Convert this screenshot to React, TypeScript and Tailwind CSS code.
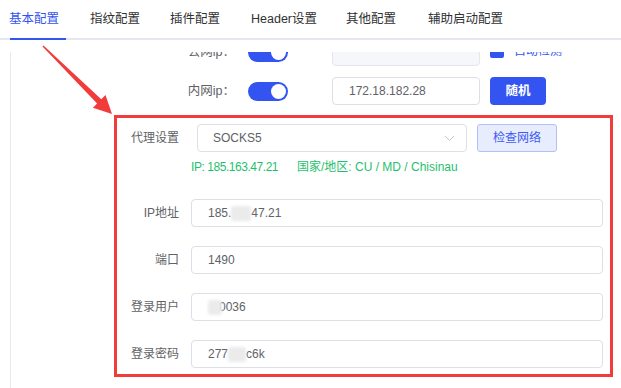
import React from "react";

const font = { fontFamily: '"Liberation Sans", "Noto Sans CJK SC", sans-serif' };

function Toggle() {
  return (
    <div className="w-[40px] h-[19px] rounded-full bg-[#3354f0] flex items-center justify-end pr-[2px] shrink-0">
      <div className="w-[15px] h-[15px] rounded-full bg-white" />
    </div>
  );
}

function Blob({ w }: { w: number }) {
  return (
    <span
      className="inline-block h-[15px] bg-[#ebebeb] blur-[1.5px] rounded-[3px] align-middle"
      style={{ width: w }}
    />
  );
}

function Field({ label, children }: { label: string; children: React.ReactNode }) {
  return (
    <div className="flex items-center h-[28px]">
      <div className="w-[62px] text-right text-[12px] text-[#606266] shrink-0">{label}</div>
      <div className="ml-[12px] w-[412px] h-[28px] border border-[#dcdfe6] rounded-[4px] flex items-center pl-[16px] text-[12px] text-[#606266]">
        {children}
      </div>
    </div>
  );
}

export default function App() {
  return (
    <div className="w-[621px] h-[388px] bg-white relative overflow-hidden" style={font}>
      {/* Tabs */}
      <div className="h-[40px] border-b-2 border-[#e4e7ed] flex items-end pl-[9px] text-[12.5px] text-[#303133]">
        <div className="w-[81px] h-[40px] -mb-[2px] flex flex-col">
          <div className="flex-1 flex items-center text-[#3354f0]">基本配置</div>
          <div className="ml-[1px] w-[56px] h-[2px] bg-[#3354f0]" />
        </div>
        <div className="h-[38px] flex items-center">
          <span className="w-[80px]">指纹配置</span>
          <span className="w-[81px]">插件配置</span>
          <span className="w-[95px]">Header设置</span>
          <span className="w-[82px]">其他配置</span>
          <span>辅助启动配置</span>
        </div>
      </div>

      {/* Content */}
      <div className="mt-[12px] ml-[10px] h-[336px] border-l border-[#e8eaee] overflow-hidden">
        <div className="-mt-[14px] flex flex-col">
          {/* Row 1 */}
          <div className="flex items-center h-[28px]">
            <div className="w-[224px] text-right text-[12.5px] text-[#606266] shrink-0">公网ip：</div>
            <div className="ml-[13px]"><Toggle /></div>
            <div className="ml-[44px] w-[148px] h-[28px] border border-[#e4e7ed] bg-[#f5f7fa] rounded-[4px]" />
            <div className="ml-[10px] flex items-center gap-[10px] text-[12px] text-[#3354f0]">
              <div className="w-[14px] h-[14px] rounded-[2px] bg-[#3354f0] -mt-[3px]" />
              <span className="-mt-[3px]">自动检测</span>
            </div>
          </div>
          {/* Row 2 */}
          <div className="flex items-center h-[28px] mt-[11px]">
            <div className="w-[224px] text-right text-[12.5px] text-[#606266] shrink-0">内网ip：</div>
            <div className="ml-[13px]"><Toggle /></div>
            <div className="ml-[44px] w-[148px] h-[28px] border border-[#dcdfe6] rounded-[4px] flex items-center pl-[16px] text-[12px] text-[#606266]">
              172.18.182.28
            </div>
            <div className="ml-[10px] w-[56px] h-[28px] rounded-[4px] bg-[#3354f0] text-white text-[12.5px] font-bold flex items-center justify-center">
              随机
            </div>
          </div>

          {/* Red framed proxy block */}
          <div className="mt-[10px] ml-[103px] w-[499px] border-[3px] border-[#f23b3b] pt-[6px] pb-[6px] pr-[7px] flex flex-col">
            <div className="flex items-center h-[28px]">
              <div className="w-[62px] text-right text-[12px] text-[#606266] shrink-0">代理设置</div>
              <div className="ml-[18px] w-[270px] h-[28px] border border-[#dcdfe6] rounded-[4px] flex items-center justify-between pl-[15px] pr-[11px] text-[12px] text-[#606266]">
                <span>SOCKS5</span>
                <svg width="11" height="7" viewBox="0 0 11 7" fill="none">
                  <path d="M1 1l4.5 4.5L10 1" stroke="#c0c4cc" strokeWidth="1" />
                </svg>
              </div>
              <div className="ml-[10px] w-[80px] h-[28px] rounded-[3px] border border-[#b3c0f7] bg-[#e8edfd] text-[12px] text-[#3d5af1] flex items-center justify-center">
                检查网络
              </div>
            </div>
            <div className="flex items-center h-[16px] mt-[7px] ml-[74px] text-[12px] text-[#1fbf6e]">
              <span className="w-[106px] tracking-[-0.45px]">IP: 185.163.47.21</span>
              <span>国家/地区: CU / MD / Chisinau</span>
            </div>
            <div className="mt-[24px] flex flex-col gap-[19px]">
              <Field label="IP地址">
                <span>185.</span>
                <Blob w={20} />
                <span>47.21</span>
              </Field>
              <Field label="端口">1490</Field>
              <Field label="登录用户">
                <Blob w={14} />
                <span className="-ml-[3px]">0036</span>
              </Field>
              <Field label="登录密码">
                <span>277</span>
                <Blob w={18} />
                <span>c6k</span>
              </Field>
            </div>
          </div>
        </div>
      </div>

      {/* Annotation arrow */}
      <svg className="absolute left-0 top-0 pointer-events-none" width="621" height="388">
        <polygon
          points="42.5,46.5 97.1,103.5 92.9,107.8 112,114 105.5,95 101.3,99.3 43.5,45.5"
          fill="#f23b3b"
        />
      </svg>
    </div>
  );
}
